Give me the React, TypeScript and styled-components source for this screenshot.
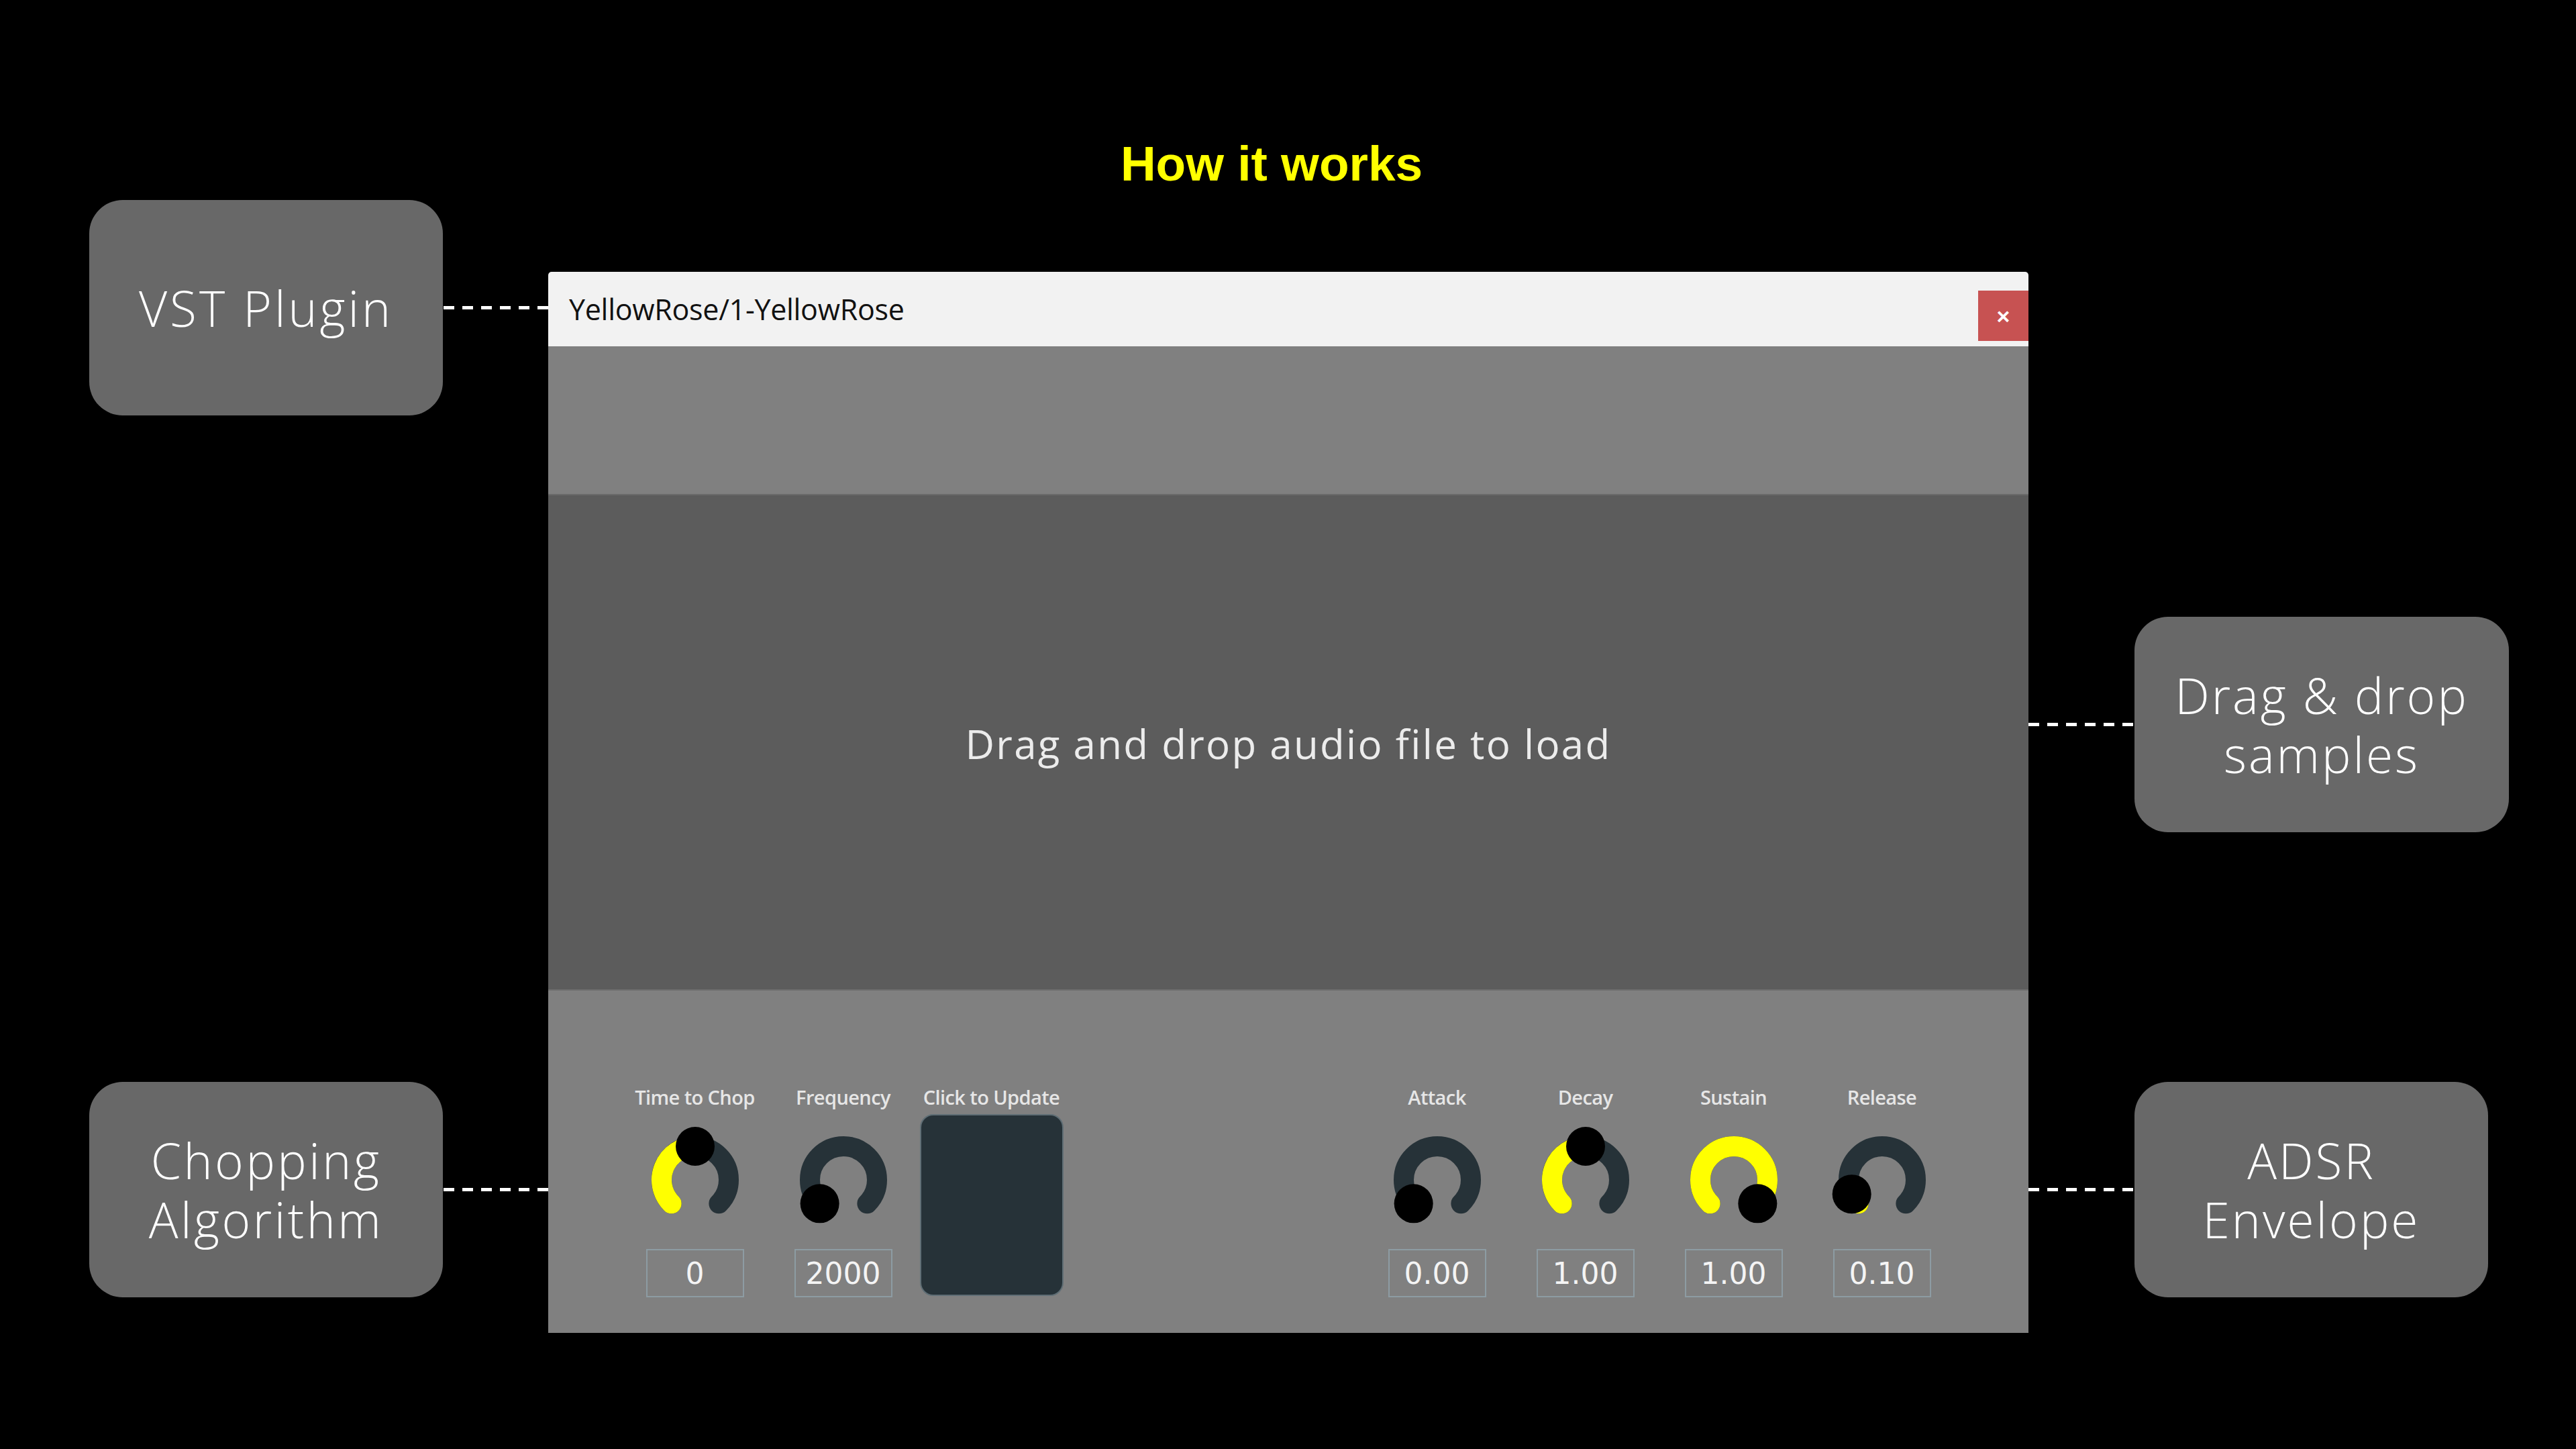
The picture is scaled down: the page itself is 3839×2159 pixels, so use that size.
import React from "react";
import styled, { createGlobalStyle } from "styled-components";

const Global = createGlobalStyle`
  html, body { margin: 0; padding: 0; background: #000; }
  body { width: 3839px; height: 2159px; overflow: hidden; }
`;

const Page = styled.div`
  width: 3839px;
  height: 2159px;
  box-sizing: border-box;
  padding-left: 133px;
  background: #000;
  display: flex;
  flex-direction: column;
`;

const Header = styled.header`
  height: 298px;
  box-sizing: border-box;
  padding-top: 207px;
  padding-right: 182px;
  text-align: center;
`;

const Title = styled.h1`
  margin: 0;
  font-family: "Liberation Sans", Arial, sans-serif;
  font-weight: 700;
  font-size: 73px;
  line-height: 73px;
  color: #ffff00;
`;

const Main = styled.div`
  display: flex;
  align-items: flex-start;
`;

const SideColumn = styled.div<{ $top: number; $gap: number }>`
  display: flex;
  flex-direction: column;
  align-items: flex-start;
  margin-top: ${(p) => p.$top}px;
  gap: ${(p) => p.$gap}px;
`;

const Callout = styled.div`
  display: flex;
  align-items: center;
`;

const Bubble = styled.div<{ $w: number; $ls?: number }>`
  width: ${(p) => p.$w}px;
  height: 321px;
  box-sizing: border-box;
  background: #686868;
  border-radius: 50px;
  display: flex;
  flex-direction: column;
  align-items: center;
  justify-content: center;
  font-family: "Open Sans", "Noto Sans", sans-serif;
  font-weight: 300;
  font-size: 73px;
  line-height: 88px;
  letter-spacing: ${(p) => p.$ls ?? 3}px;
  color: #fff;
  text-align: center;
  white-space: nowrap;
`;

const BubbleLine = styled.span`
  display: block;
  height: 88px;
  line-height: 88px;
`;

const Dash = styled.div<{ $w: number; $dir: "left" | "right" }>`
  width: ${(p) => p.$w}px;
  height: 5px;
  background: repeating-linear-gradient(
    to ${(p) => p.$dir},
    #ffffff 0 16px,
    transparent 16px 28px
  );
`;

const Window = styled.div`
  width: 2206px;
  margin-top: 107px;
  display: flex;
  flex-direction: column;
  border-radius: 5px 5px 0 0;
  overflow: hidden;
`;

const TitleBar = styled.div`
  height: 111px;
  box-sizing: border-box;
  background: #f2f2f2;
  display: flex;
  align-items: center;
  padding-left: 31px;
`;

const TitleText = styled.div`
  flex: 1;
  font-family: "Open Sans", "Noto Sans", sans-serif;
  font-size: 43px;
  line-height: 43px;
  color: #111;
  letter-spacing: -0.3px;
`;

const CloseButton = styled.div`
  width: 75px;
  height: 75px;
  align-self: flex-end;
  margin-bottom: 8px;
  background: #c75252;
  color: #fff;
  display: flex;
  align-items: center;
  justify-content: center;
  font-family: "Liberation Sans", Arial, sans-serif;
  font-weight: 700;
  font-size: 34px;
  line-height: 1;
`;

const TopBand = styled.div`
  height: 220px;
  background: #808080;
`;

const DropZone = styled.div`
  height: 738px;
  box-sizing: border-box;
  border-top: 2px solid #6a6a6a;
  background: #5c5c5c;
  display: flex;
  align-items: center;
  justify-content: center;
  font-family: "Open Sans", "Noto Sans", sans-serif;
  font-size: 60px;
  letter-spacing: 2.3px;
  color: #ececec;
  padding-top: 4px;
`;

const ControlPanel = styled.div`
  height: 512px;
  box-sizing: border-box;
  border-top: 2px solid #6e6e6e;
  background: #808080;
  padding: 144px 108px 0;
  display: flex;
  justify-content: space-between;
  align-items: flex-start;
`;

const Group = styled.div`
  display: flex;
`;

const Control = styled.div`
  width: 221px;
  display: flex;
  flex-direction: column;
  align-items: center;
`;

const Label = styled.div`
  font-family: "Open Sans", "Noto Sans", sans-serif;
  font-weight: 600;
  font-size: 29px;
  line-height: 29px;
  color: #e6e6e6;
  white-space: nowrap;
  letter-spacing: -0.6px;
`;

const KnobSvg = styled.svg`
  display: block;
  margin-top: 29px;
`;

const ValueBox = styled.div`
  margin-top: 23px;
  width: 146px;
  height: 72px;
  box-sizing: border-box;
  border: 2px solid #8d9ca3;
  display: flex;
  align-items: center;
  justify-content: center;
  font-family: "DejaVu Sans", sans-serif;
  font-size: 44px;
  color: #f4f4f4;
`;

const UpdateButton = styled.div`
  margin-top: 11px;
  width: 214px;
  height: 271px;
  box-sizing: border-box;
  background: #263238;
  border: 2px solid #5f6e75;
  border-radius: 20px;
`;

const C = 80;
const R = 50;

function pt(angle: number, r: number = R) {
  const a = (angle * Math.PI) / 180;
  return { x: C + r * Math.sin(a), y: C - r * Math.cos(a) };
}

function arc(a0: number, a1: number) {
  const s = pt(a0);
  const e = pt(a1);
  const large = a1 - a0 > 180 ? 1 : 0;
  return `M ${s.x} ${s.y} A ${R} ${R} 0 ${large} 1 ${e.x} ${e.y}`;
}

function Knob({ angle }: { angle: number }) {
  const t = pt(angle);
  return (
    <KnobSvg width={160} height={160} viewBox="0 0 160 160">
      <path d={arc(-135, 135)} stroke="#263238" strokeWidth={30} fill="none" strokeLinecap="round" />
      {angle > -135 && (
        <path d={arc(-135, angle)} stroke="#ffff00" strokeWidth={30} fill="none" strokeLinecap="round" />
      )}
      <circle cx={t.x} cy={t.y} r={29} fill="#000" />
    </KnobSvg>
  );
}

type KnobDef = { label: string; value: string; angle: number };

const chopKnobs: KnobDef[] = [
  { label: "Time to Chop", value: "0", angle: 0 },
  { label: "Frequency", value: "2000", angle: -135 },
];

const adsrKnobs: KnobDef[] = [
  { label: "Attack", value: "0.00", angle: -135 },
  { label: "Decay", value: "1.00", angle: 0 },
  { label: "Sustain", value: "1.00", angle: 135 },
  { label: "Release", value: "0.10", angle: -115 },
];

function KnobControl({ k }: { k: KnobDef }) {
  return (
    <Control>
      <Label>{k.label}</Label>
      <Knob angle={k.angle} />
      <ValueBox>{k.value}</ValueBox>
    </Control>
  );
}

export default function App() {
  return (
    <>
      <Global />
      <Page>
        <Header>
          <Title>How it works</Title>
        </Header>
        <Main>
          <SideColumn $top={0} $gap={993}>
            <Callout>
              <Bubble $w={527} $ls={4}>VST Plugin</Bubble>
              <Dash $w={157} $dir="left" />
            </Callout>
            <Callout>
              <Bubble $w={527} $ls={3.5}>
                <BubbleLine>Chopping</BubbleLine>
                <BubbleLine>Algorithm</BubbleLine>
              </Bubble>
              <Dash $w={157} $dir="left" />
            </Callout>
          </SideColumn>

          <Window>
            <TitleBar>
              <TitleText>YellowRose/1-YellowRose</TitleText>
              <CloseButton>×</CloseButton>
            </TitleBar>
            <TopBand />
            <DropZone>Drag and drop audio file to load</DropZone>
            <ControlPanel>
              <Group>
                {chopKnobs.map((k) => (
                  <KnobControl key={k.label} k={k} />
                ))}
                <Control>
                  <Label>Click to Update</Label>
                  <UpdateButton />
                </Control>
              </Group>
              <Group>
                {adsrKnobs.map((k) => (
                  <KnobControl key={k.label} k={k} />
                ))}
              </Group>
            </ControlPanel>
          </Window>

          <SideColumn $top={621} $gap={372}>
            <Callout>
              <Dash $w={158} $dir="right" />
              <Bubble $w={558}>
                <BubbleLine>Drag &amp; drop</BubbleLine>
                <BubbleLine>samples</BubbleLine>
              </Bubble>
            </Callout>
            <Callout>
              <Dash $w={158} $dir="right" />
              <Bubble $w={527}>
                <BubbleLine>ADSR</BubbleLine>
                <BubbleLine>Envelope</BubbleLine>
              </Bubble>
            </Callout>
          </SideColumn>
        </Main>
      </Page>
    </>
  );
}
